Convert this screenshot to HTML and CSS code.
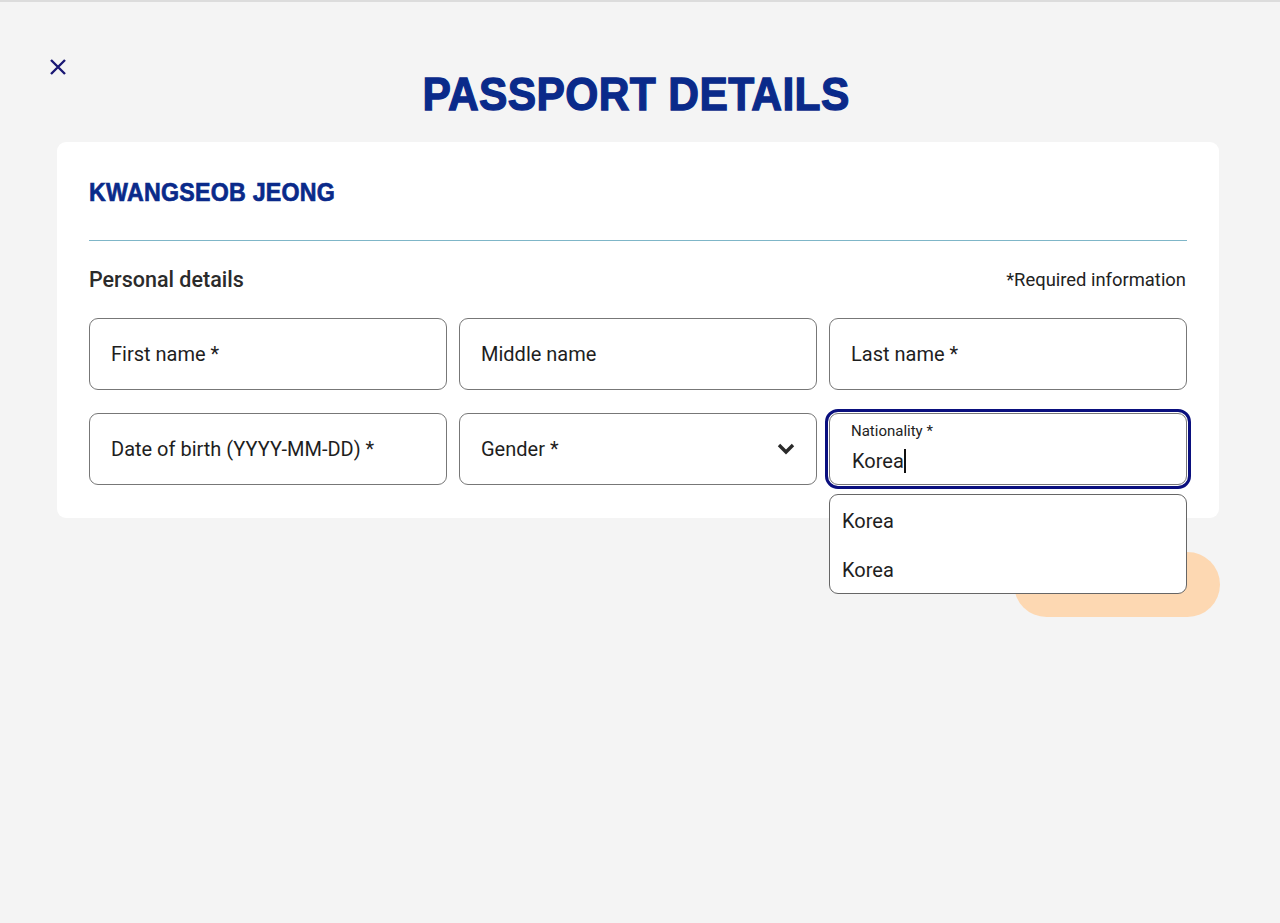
FILE: index.html
```html
<!DOCTYPE html>
<html lang="en">
<head>
<meta charset="utf-8">
<title>Passport details</title>
<link rel="stylesheet" href="styles.css">
</head>
<body>
<div class="page">
  <header class="header">
    <button class="close" aria-label="Close">
      <svg width="16" height="16" viewBox="0 0 16 16"><path d="M1 1 L15 15 M15 1 L1 15" stroke="#1a1874" stroke-width="2.4" fill="none"/></svg>
    </button>
    <h1 class="title">PASSPORT DETAILS</h1>
    <div></div>
  </header>

  <main class="card">
    <h2 class="name">KWANGSEOB JEONG</h2>
    <hr class="divider">
    <div class="section-head">
      <h3 class="section-title">Personal details</h3>
      <span class="required">*Required information</span>
    </div>
    <div class="fields">
      <div class="field"><span class="placeholder">First name *</span></div>
      <div class="field"><span class="placeholder">Middle name</span></div>
      <div class="field"><span class="placeholder">Last name *</span></div>
      <div class="field"><span class="placeholder">Date of birth (YYYY-MM-DD) *</span></div>
      <div class="field field-select">
        <span class="placeholder">Gender *</span>
        <svg class="chevron" width="18" height="12" viewBox="0 0 18 12"><path d="M2 2 L9 9 L16 2" stroke="#2a2a2a" stroke-width="3.4" fill="none"/></svg>
      </div>
      <div class="combo">
        <div class="field field-focus">
          <span class="float-label">Nationality *</span>
          <span class="value">Korea<span class="caret"></span></span>
        </div>
        <ul class="options">
          <li>Korea</li>
          <li>Korea</li>
        </ul>
      </div>
    </div>
  </main>

  <div class="actions">
    <button class="continue" aria-label="Continue"></button>
  </div>
</div>
</body>
</html>
```
FILE: styles.css
```css
* { box-sizing: border-box; }
html, body { margin: 0; padding: 0; }
body {
  background: #f4f4f4;
  border-top: 2px solid #dcdcdc;
  font-family: Roboto, "Liberation Sans", sans-serif;
  color: #222;
  min-height: 923px;
}
.page {
  padding: 0 61px 0 57px;
}
.header {
  display: grid;
  grid-template-columns: 1fr auto 1fr;
  align-items: start;
  height: 140px;
}
.close {
  background: none;
  border: 0;
  padding: 0;
  margin: 57px 0 0 -7px;
  width: 16px;
  height: 16px;
  justify-self: start;
  cursor: pointer;
}
.close svg { display: block; }
.title {
  margin: 66px 0 0 -4px;
  font-family: "Liberation Sans", sans-serif;
  font-weight: 700;
  font-size: 47px;
  line-height: 52px;
  color: #0a2a8a;
  letter-spacing: 0.4px;
  -webkit-text-stroke: 1.3px #0a2a8a;
  transform: scaleX(0.905);
  transform-origin: center;
}
.card {
  background: #fff;
  border-radius: 9px;
  padding: 36px 32px 33px 32px;
}
.name {
  margin: 0;
  font-family: "Liberation Sans", sans-serif;
  font-weight: 700;
  font-size: 26.5px;
  line-height: 28px;
  color: #0a2a8a;
  -webkit-text-stroke: 0.7px #0a2a8a;
  letter-spacing: 0.3px;
  transform: scaleX(0.875);
  transform-origin: left center;
}
.divider {
  border: 0;
  border-top: 1px solid #7fb6c8;
  margin: 34px 0 0 0;
}
.section-head {
  display: flex;
  justify-content: space-between;
  align-items: center;
  margin-top: 26px;
}
.section-title {
  margin: 0;
  font-size: 21.5px;
  font-weight: 500;
  line-height: 26px;
  color: #2b2b2b;
}
.required {
  font-size: 18.4px;
  line-height: 26px;
  color: #222;
  margin-right: 1px;
}
.fields {
  margin-top: 25px;
  display: grid;
  grid-template-columns: repeat(3, 1fr);
  column-gap: 12px;
  row-gap: 23px;
}
.field {
  height: 72px;
  border: 1px solid #777;
  border-radius: 9px;
  background: #fff;
  display: flex;
  align-items: center;
  padding: 0 21px;
  font-size: 20px;
  color: #1e1e1e;
}
.field-select { justify-content: space-between; padding-right: 21px; }
.chevron { display: block; }
.combo { position: relative; }
.field-focus {
  flex-direction: column;
  align-items: flex-start;
  justify-content: flex-start;
  outline: 3px solid #0a0f7e;
  outline-offset: 1px;
  padding-top: 8px;
}
.float-label {
  font-size: 15px;
  line-height: 19px;
  color: #222;
}
.value {
  font-size: 20px;
  line-height: 28px;
  margin-top: 6px;
  margin-left: 1px;
  display: inline-flex;
  align-items: center;
}
.caret {
  display: inline-block;
  width: 2px;
  height: 24px;
  background: #111;
}
.options {
  position: absolute;
  left: 0;
  right: 0;
  top: 81px;
  margin: 0;
  padding: 0;
  list-style: none;
  background: #fff;
  border: 1px solid #666;
  border-radius: 9px;
  z-index: 2;
}
.options li {
  height: 49px;
  padding: 2px 12px 0;
  display: flex;
  align-items: center;
  font-size: 20px;
  color: #1e1e1e;
}
.actions {
  display: flex;
  justify-content: flex-end;
  margin-top: 34px;
  margin-right: -1px;
}
.continue {
  width: 206px;
  height: 65px;
  border: 0;
  border-radius: 33px;
  background: #fdd8b2;
}
```
